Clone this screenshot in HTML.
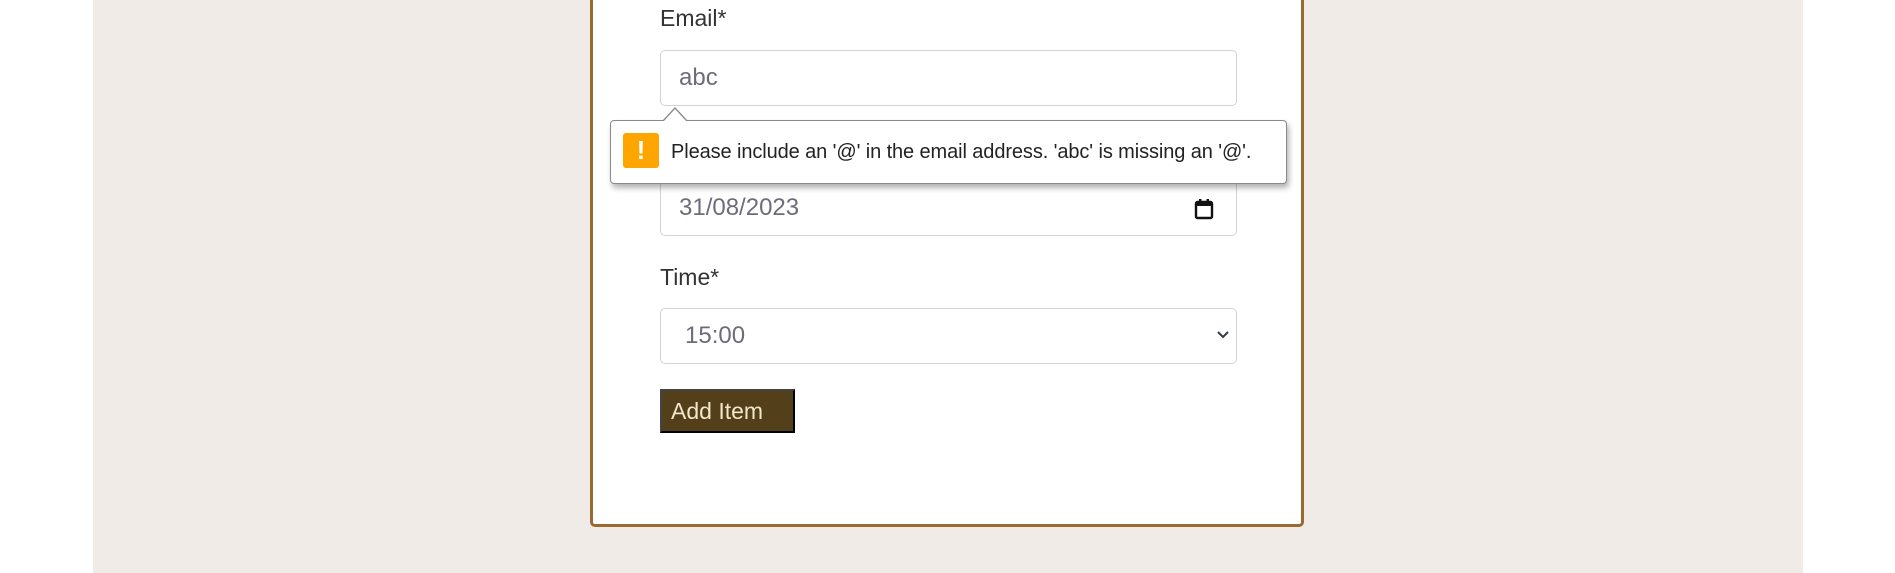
<!DOCTYPE html>
<html><head><style>
html,body{margin:0;padding:0;width:1895px;height:573px;overflow:hidden;background:#fff;font-family:"Liberation Sans",sans-serif;}
.bg{position:absolute;left:93px;top:0;width:1710px;height:573px;background:#f0ebe7;}
.card{position:absolute;left:590px;top:-10px;width:708px;height:531px;border:3px solid #9a6a31;border-radius:5px;background:#fff;}
.lbl{position:absolute;left:660px;font-size:23px;color:#333;font-weight:normal;}
.inp{position:absolute;left:660px;width:577px;height:56px;border:1px solid #ced4da;border-radius:5px;background:#fff;box-sizing:border-box;font-size:24px;color:#6c6c7a;padding-left:18px;line-height:54px;}
.btn{position:absolute;left:660px;top:389px;width:135px;height:44px;box-sizing:border-box;background:#533f19;border:2px outset #444;border-right-color:#000;border-bottom-color:#000;color:#f3e6cc;font-size:23px;line-height:40px;padding-left:9px;}
.tip{position:absolute;left:610px;top:120px;width:677px;height:64px;box-sizing:border-box;border:1px solid #8a8a8a;border-radius:4px;background:#fff;box-shadow:2px 4px 6px rgba(0,0,0,.3);}
.tip .ic{position:absolute;left:12px;top:12px;width:36px;height:35px;background:#ffa500;border-radius:3px;color:#fff;font-weight:bold;font-size:26px;text-align:center;line-height:35px;}
.tip .tx{position:absolute;left:60px;top:20px;font-size:20px;color:#222;white-space:nowrap;letter-spacing:-0.1px;}
.arrow{position:absolute;left:662px;top:107px;width:0;height:0;border-left:13px solid transparent;border-right:13px solid transparent;border-bottom:14px solid #8a8a8a;}
.arrow2{position:absolute;left:663px;top:109px;width:0;height:0;border-left:12px solid transparent;border-right:12px solid transparent;border-bottom:13px solid #fff;}
</style></head><body>
<div class="bg"></div>
<div class="card"></div>
<div class="lbl" style="top:5px">Email*</div>
<div class="inp" style="top:50px">abc</div>
<div class="inp" style="top:180px">31/08/2023
<svg style="position:absolute;right:22px;top:17px" width="20" height="22" viewBox="0 0 20 22"><rect x="2" y="4" width="16" height="16" rx="1.5" fill="none" stroke="#111" stroke-width="2.4"/><rect x="2" y="4" width="16" height="4" fill="#111"/><rect x="5" y="1" width="2.5" height="4" fill="#111"/><rect x="12.5" y="1" width="2.5" height="4" fill="#111"/></svg></div>
<div class="lbl" style="top:264px">Time*</div>
<div class="inp" style="top:308px;padding-left:24px">15:00
<svg style="position:absolute;right:6px;top:21px" width="14" height="10" viewBox="0 0 14 10"><path d="M2 2 L7 7 L12 2" fill="none" stroke="#343a40" stroke-width="2"/></svg></div>
<div class="btn">Add Item</div>
<div class="tip"><div class="ic">!</div><div class="tx">Please include an '@' in the email address. 'abc' is missing an '@'.</div></div>
<div class="arrow"></div><div class="arrow2"></div>
</body></html>
